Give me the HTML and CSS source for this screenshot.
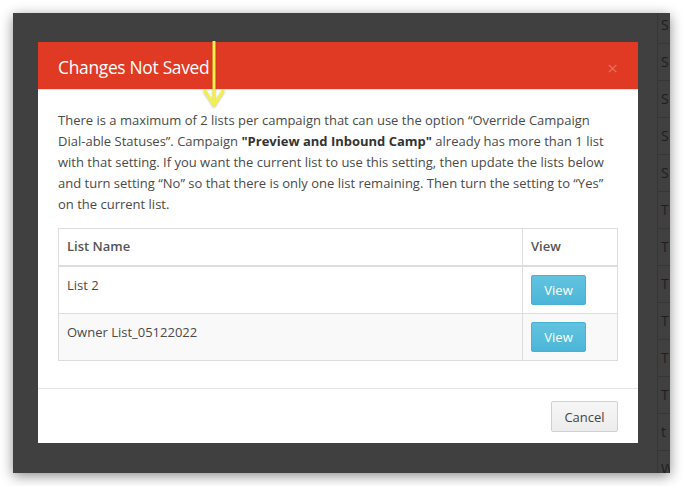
FILE: index.html
```html
<!DOCTYPE html>
<html>
<head>
<meta charset="utf-8">
<link rel="stylesheet" href="styles.css">
</head>
<body>
<div class="frame">
  <div class="modal">
    <div class="modal-header">
      <span class="modal-title">Changes Not Saved</span>
      <span class="close">×</span>
    </div>
    <div class="modal-body">
      <p class="message">There is a maximum of 2 lists per campaign that can use the option “Override Campaign Dial-able Statuses”. Campaign <b>"Preview and Inbound Camp"</b> already has more than 1 list with that setting. If you want the current list to use this setting, then update the lists below and turn setting “No” so that there is only one list remaining. Then turn the setting to “Yes” on the current list.</p>
      <table class="lists">
        <thead>
          <tr><th class="col-name">List Name</th><th class="col-view">View</th></tr>
        </thead>
        <tbody>
          <tr><td>List 2</td><td><button class="btn-info">View</button></td></tr>
          <tr class="striped"><td>Owner List_05122022</td><td><button class="btn-info">View</button></td></tr>
        </tbody>
      </table>
    </div>
    <div class="modal-footer">
      <button class="btn-default">Cancel</button>
    </div>
  </div>
  <div class="behind-col">
    <div class="behind-row">S</div>
    <div class="behind-row">S</div>
    <div class="behind-row">S</div>
    <div class="behind-row">S</div>
    <div class="behind-row">S</div>
    <div class="behind-row">T</div>
    <div class="behind-row">T</div>
    <div class="behind-row">T</div>
    <div class="behind-row">T</div>
    <div class="behind-row">T</div>
    <div class="behind-row">T</div>
    <div class="behind-row">t</div>
    <div class="behind-row">W</div>
  </div>
  <svg class="arrow" width="30" height="70" viewBox="0 0 30 70">
    <line x1="15" y1="1" x2="15" y2="64" stroke="#f4f04a" stroke-width="3" stroke-linecap="round"/>
    <polyline points="6,50 15,64 24,50" fill="none" stroke="#f4f04a" stroke-width="3.2" stroke-linecap="round" stroke-linejoin="round"/>
  </svg>
</div>
</body>
</html>
```

FILE: styles.css
```css
html, body {
  margin: 0;
  padding: 0;
  background: #ffffff;
}

body {
  padding: 13px;
  width: 683px;
  height: 486px;
  box-sizing: border-box;
  overflow: hidden;
  font-family: "Open Sans", "DejaVu Sans", sans-serif;
}

.frame {
  position: relative;
  width: 657px;
  height: 460px;
  background: #404040;
  display: flex;
  align-items: flex-start;
  overflow: hidden;
  box-shadow: 0 3px 12px rgba(0, 0, 0, 0.45);
}

.modal {
  margin: 29px 0 0 25px;
  width: 600px;
  background: #ffffff;
  display: flex;
  flex-direction: column;
}

.modal-header {
  background: #e03a24;
  height: 47px;
  border-bottom: 1px solid #e5e5e5;
  padding: 0 20px;
  display: flex;
  align-items: center;
  justify-content: space-between;
  box-sizing: content-box;
}

.modal-title {
  color: #ffffff;
  font-size: 17.4px;
  letter-spacing: -0.3px;
  margin-top: 2px;
}

.close {
  color: rgba(255, 255, 255, 0.28);
  font-size: 19px;
  margin-right: 0;
  margin-top: 4px;
}

.modal-body {
  padding: 20px 20px 0 20px;
}

.message {
  margin: 0 0 13px 0;
  font-size: 13px;
  line-height: 21px;
  color: #4a4a4a;
}

.message b {
  color: #333;
}

.lists {
  width: 100%;
  border-collapse: collapse;
  font-size: 13px;
  color: #4a4a4a;
  margin-bottom: 27px;
}

.lists th,
.lists td {
  border: 1px solid #dddddd;
  text-align: left;
  vertical-align: top;
  padding: 8px 8px 8px 8px;
  line-height: 20px;
}

.lists th {
  font-weight: 600;
  color: #555;
  padding-top: 7px;
  padding-bottom: 9px;
  border-bottom: 2px solid #dddddd;
}

.col-view {
  width: 78px;
}

.striped td {
  background: #f9f9f9;
}

.btn-info {
  font-family: "Open Sans", "DejaVu Sans", sans-serif;
  font-size: 13px;
  color: #ffffff;
  background: linear-gradient(#62c3e0, #4cb6d8);
  border: 1px solid #46b3d6;
  border-radius: 2px;
  width: 55px;
  height: 30px;
  padding: 0;
  line-height: 28px;
}

.modal-footer {
  border-top: 1px solid #e5e5e5;
  padding: 12px 20px 11px 20px;
  display: flex;
  justify-content: flex-end;
}

.btn-default {
  font-family: "Open Sans", "DejaVu Sans", sans-serif;
  font-size: 13px;
  color: #444;
  background: linear-gradient(#f6f6f6, #ececec);
  border: 1px solid #d0d0d0;
  border-radius: 2px;
  width: 67px;
  height: 31px;
  padding: 0;
}

.behind-col {
  margin-left: auto;
  margin-top: -6px;
  width: 12px;
  border-left: 1px solid #363636;
  display: flex;
  flex-direction: column;
}

.behind-row {
  height: 36px;
  border-bottom: 1px solid #363636;
  color: #1e1e1e;
  font-size: 14px;
  line-height: 36px;
  padding-left: 3px;
  white-space: nowrap;
}

.arrow {
  position: absolute;
  left: 186px;
  top: 28px;
  filter: drop-shadow(0 1px 1px rgba(0, 0, 0, 0.25));
}
```
